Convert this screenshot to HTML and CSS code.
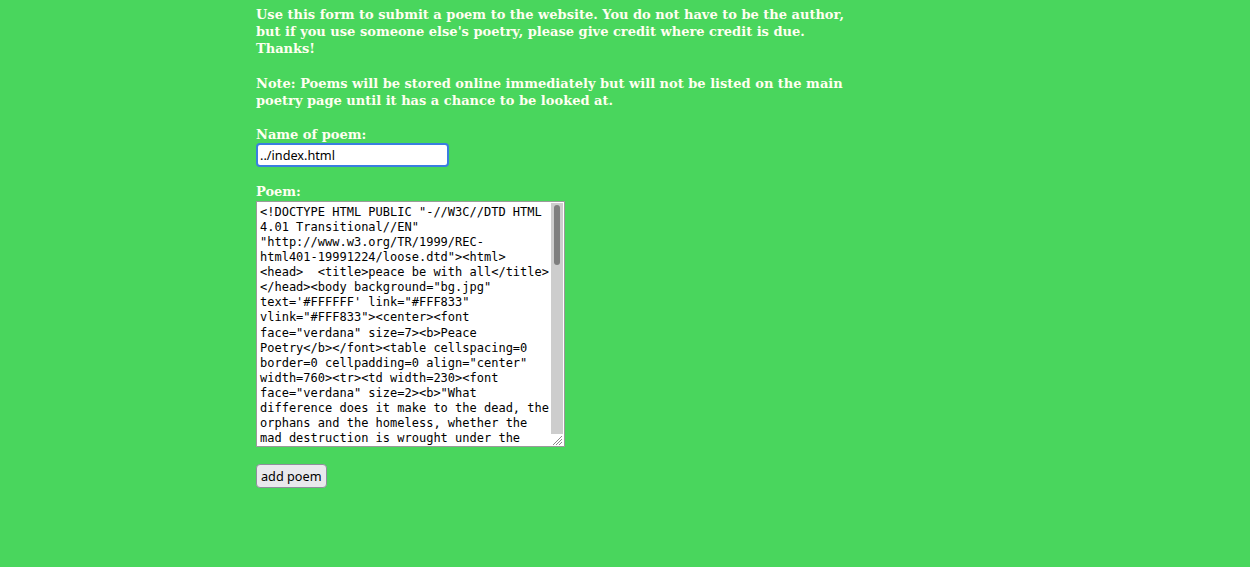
FILE: index.html
```html
<!DOCTYPE html>
<html>
<head>
<meta charset="utf-8">
<title>Submit a poem</title>
<link rel="stylesheet" href="styles.css">
</head>
<body>
<div class="page">
  <form class="form">
    <p class="intro intro-first">Use this form to submit a poem to the website. You do not have to be the author, but if you use someone else's poetry, please give credit where credit is due. Thanks!</p>
    <p class="intro">Note: Poems will be stored online immediately but will not be listed on the main poetry page until it has a chance to be looked at.</p>
    <label class="label" for="name">Name of poem:</label>
    <input class="name-input" id="name" type="text" value="../index.html">
    <label class="label label-poem" for="poem">Poem:</label>
    <div class="poem-box">
      <textarea class="poem" id="poem"><!DOCTYPE HTML PUBLIC "-//W3C//DTD HTML 4.01 Transitional//EN" "http://www.w3.org/TR/1999/REC-html401-&#8288;19991224/loose.dtd"><html>
<head>  <title>peace be with all</title>
</head><body background="bg.jpg" text='#FFFFFF' link="#FFF833" vlink="#FFF833"><center><font face="verdana" size=7><b>Peace Poetry</b></font><table cellspacing=0 border=0 cellpadding=0 align="center" width=760><tr><td width=230><font face="verdana" size=2><b>"What difference does it make to the dead, the orphans and the homeless, whether the mad destruction is wrought under the name of totalitarianism or the holy name of liberty or democracy?" - Mahatma Gandhi</b></font></td></tr></table></center></body></html></textarea>
      <div class="scrollbar">
        <div class="track"><div class="thumb"></div></div>
        <div class="resizer">
          <svg width="12" height="12" viewBox="0 0 12 12">
            <path d="M11 2 L2 11 M11 5 L5 11 M11 8 L8 11" stroke="#8a8a8a" stroke-width="1" fill="none"/>
          </svg>
        </div>
      </div>
    </div>
    <button class="submit" type="button">add poem</button>
  </form>
</div>
</body>
</html>
```
FILE: styles.css
```css
html, body {
  margin: 0;
  padding: 0;
  background: #49d65d;
}
.page {
  padding: 6px 0 0 256px;
}
.form {
  display: flex;
  flex-direction: column;
  align-items: flex-start;
  width: 600px;
  font-family: "DejaVu Serif", serif;
  font-weight: bold;
  font-size: 13px;
  line-height: 17px;
  color: #fffff0;
}
.intro {
  margin: 0 0 17px 0;
}
.intro-first {
  margin-bottom: 18px;
}
.label {
  display: block;
}
.label-poem {
  margin-top: 16px;
}
.name-input {
  box-sizing: border-box;
  width: 193px;
  height: 24px;
  margin: 0;
  padding: 1px 2px;
  border: 2px solid #3a7ee0;
  border-radius: 4px;
  background: #fff;
  color: #000;
  font-family: "Noto Sans", sans-serif;
  font-weight: normal;
  font-size: 12.7px;
  outline: none;
}
.poem-box {
  box-sizing: border-box;
  display: flex;
  width: 309px;
  height: 246px;
  margin-top: 1px;
  border: 1px solid #9a9a9a;
  background: #fff;
}
.poem {
  flex: 1;
  min-width: 0;
  margin: 0;
  padding: 3px 1px 0 3px;
  border: none;
  outline: none;
  background: #fff;
  color: #000;
  font-family: "DejaVu Sans Mono", monospace;
  font-weight: normal;
  font-size: 12px;
  line-height: 15.07px;
  resize: none;
  overflow: hidden;
}
.scrollbar {
  display: flex;
  flex-direction: column;
  width: 12px;
  margin: 1px 1px 0 0;
}
.track {
  flex: 1;
  display: flex;
  justify-content: center;
  padding-top: 2px;
  background: #cdcdcd;
}
.thumb {
  width: 6px;
  height: 60px;
  border-radius: 3px;
  background: #7f7f7f;
}
.resizer {
  height: 12px;
  background: #fff;
}
.resizer svg {
  display: block;
}
.submit {
  margin-top: 17px;
  height: 24px;
  padding: 0 4px;
  border: 1px solid #8f8f9d;
  border-radius: 4px;
  background: #e9e9ed;
  color: #000;
  font-family: "Noto Sans", sans-serif;
  font-weight: normal;
  font-size: 12.7px;
}
```
